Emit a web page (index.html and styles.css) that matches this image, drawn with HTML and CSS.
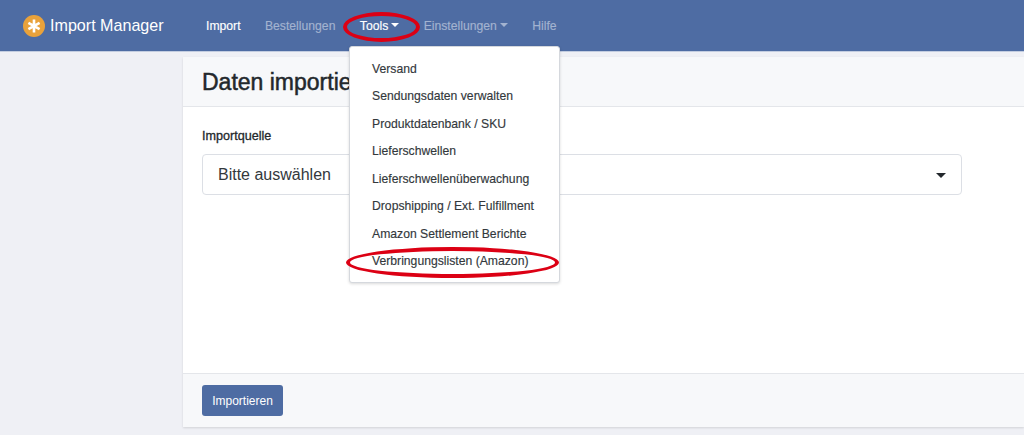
FILE: index.html

```html
<!DOCTYPE html>
<html lang="de">
<head>
  <meta charset="UTF-8">
  <title>Import Manager</title>
  <link rel="stylesheet" href="styles.css">
</head>
<body>

  <nav class="navbar">
    <a class="brand" href="#">
      <svg class="brand-icon" viewBox="0 0 22 22" width="22" height="22">
        <circle cx="11" cy="11" r="11" fill="#e9a23b"/>
        <path d="M11 4.5v13M5.4 7.8l11.2 6.4M16.6 7.8L5.4 14.2" stroke="#fff" stroke-width="2.6" fill="none"/>
      </svg>
      Import Manager
    </a>
    <ul class="nav">
      <li class="active">Import</li>
      <li>Bestellungen</li>
      <li class="active caret">Tools</li>
      <li class="caret">Einstellungen</li>
      <li>Hilfe</li>
    </ul>
  </nav>

  <div class="layout">
    <main class="card">
      <div class="card-header">
        <h1>Daten importieren</h1>
      </div>
      <div class="card-body">
        <label class="label">Importquelle</label>
        <div class="select">
          <span>Bitte auswählen</span>
          <i class="select-arrow"></i>
        </div>
      </div>
      <div class="card-footer">
        <button class="btn">Importieren</button>
      </div>
    </main>
  </div>

  <ul class="dropdown">
    <li>Versand</li>
    <li>Sendungsdaten verwalten</li>
    <li>Produktdatenbank / SKU</li>
    <li>Lieferschwellen</li>
    <li>Lieferschwellenüberwachung</li>
    <li>Dropshipping / Ext. Fulfillment</li>
    <li>Amazon Settlement Berichte</li>
    <li>Verbringungslisten (Amazon)</li>
  </ul>

  <div class="ring ring-tools"></div>
  <div class="ring ring-list"></div>

</body>
</html>
```

FILE: styles.css

```css
* {
  box-sizing: border-box;
}
html, body {
  height: 100%;
}
body {
  margin: 0;
  background: #eff0f5;
  color: #23282c;
  font-family: "Liberation Sans", Arial, sans-serif;
  font-size: 12.2px;
  overflow: hidden;
  display: flex;
  flex-direction: column;
}
.navbar {
  height: 52px;
  flex: none;
  background: #4e6ca3;
  border-bottom: 1px solid #c3cde0;
  display: flex;
  align-items: center;
  padding-left: 23px;
}
.brand {
  display: flex;
  align-items: center;
  gap: 5px;
  width: 183px;
  color: #fff;
  font-size: 16.1px;
  text-decoration: none;
}
.brand-icon {
  flex: none;
}
.nav {
  list-style: none;
  margin: 1px 0 0;
  padding: 0;
  display: flex;
  gap: 24.4px;
  color: #a3b3d0;
  -webkit-text-stroke: 0.15px currentColor;
}
.nav .active {
  color: #fff;
}
.caret::after {
  content: "";
  display: inline-block;
  margin-left: 3px;
  vertical-align: 3px;
  border-top: 4px solid currentColor;
  border-left: 4px solid transparent;
  border-right: 4px solid transparent;
}
.layout {
  flex: 1;
  padding: 5px 0 8px 183px;
  display: flex;
  min-height: 0;
}
.card {
  flex: 1;
  background: #fff;
  display: flex;
  flex-direction: column;
  box-shadow: 0 1px 2px rgba(0, 0, 0, 0.12);
}
.card-header {
  height: 50px;
  background: #f7f8fa;
  border-bottom: 1px solid #e4e6ea;
  padding: 1px 0 0 19px;
  display: flex;
  align-items: center;
}
h1 {
  margin: 0;
  font-size: 23px;
  font-weight: 400;
  color: #23282c;
  -webkit-text-stroke: 0.5px currentColor;
}
.card-body {
  flex: 1;
  padding: 22px 62px 0 19px;
}
.label {
  display: block;
  font-size: 12.6px;
  margin-bottom: 11px;
  -webkit-text-stroke: 0.3px currentColor;
}
.select {
  height: 41px;
  border: 1px solid #dcdfe5;
  border-radius: 4px;
  padding: 1px 16px 0 15px;
  font-size: 16px;
  color: #33383c;
  display: flex;
  align-items: center;
  justify-content: space-between;
}
.select-arrow {
  border-top: 5px solid #23282c;
  border-left: 5px solid transparent;
  border-right: 5px solid transparent;
  margin-right: -1px;
}
.card-footer {
  height: 54px;
  flex: none;
  background: #f7f8fa;
  border-top: 1px solid #e4e6ea;
  padding-left: 19px;
  display: flex;
  align-items: center;
}
.btn {
  height: 31px;
  width: 81px;
  padding: 0;
  background: #4e6ca3;
  color: #fff;
  border: none;
  border-radius: 3px;
  font-family: inherit;
  font-size: 12px;
}
.dropdown {
  position: absolute;
  left: 349px;
  top: 46px;
  width: 211px;
  height: 237px;
  margin: 0;
  padding: 8px 0;
  list-style: none;
  background: #fff;
  border: 1px solid #d5d8dd;
  border-radius: 3px;
  box-shadow: 0 1px 3px rgba(0, 0, 0, 0.15);
  font-size: 12.2px;
  color: #33383c;
  -webkit-text-stroke: 0.15px currentColor;
}
.dropdown li {
  height: 27.5px;
  padding-left: 22px;
  display: flex;
  align-items: center;
}
.ring {
  position: absolute;
  border: 4px solid #dc0014;
  border-radius: 50%;
}
.ring-tools {
  left: 343px;
  top: 12px;
  width: 77px;
  height: 30px;
}
.ring-list {
  left: 346px;
  top: 247px;
  width: 213px;
  height: 31px;
}
```
